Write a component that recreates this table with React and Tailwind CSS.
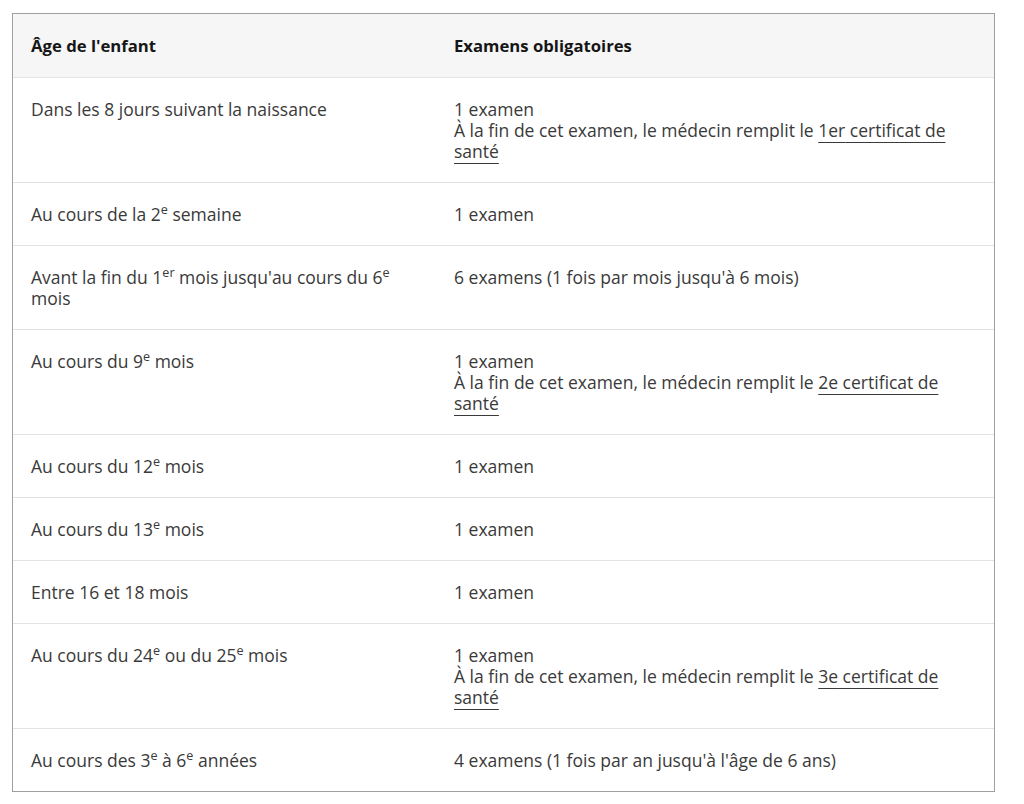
import React from "react";

const Sup = ({ children }) => (
  <span className="relative top-[-0.55em] align-baseline text-[0.72em] leading-none">{children}</span>
);

const Link = ({ children }) => (
  <a href="#" className="text-[#3a3a3a] underline decoration-[#3a3a3a] decoration-1 underline-offset-[5px]">
    {children}
  </a>
);

const Cert = ({ label }) => (
  <>
    1 examen
    <br />
    À la fin de cet examen, le médecin remplit le <Link>{label} certificat de santé</Link>
  </>
);

const rows = [
  [<>Dans les 8 jours suivant la naissance</>, <Cert label="1er" />],
  [<>Au cours de la 2<Sup>e</Sup> semaine</>, <>1 examen</>],
  [
    <>Avant la fin du 1<Sup>er</Sup> mois jusqu'au cours du 6<Sup>e</Sup> mois</>,
    <>6 examens (1 fois par mois jusqu'à 6 mois)</>,
  ],
  [<>Au cours du 9<Sup>e</Sup> mois</>, <Cert label="2e" />],
  [<>Au cours du 12<Sup>e</Sup> mois</>, <>1 examen</>],
  [<>Au cours du 13<Sup>e</Sup> mois</>, <>1 examen</>],
  [<>Entre 16 et 18 mois</>, <>1 examen</>],
  [<>Au cours du 24<Sup>e</Sup> ou du 25<Sup>e</Sup> mois</>, <Cert label="3e" />],
  [<>Au cours des 3<Sup>e</Sup> à 6<Sup>e</Sup> années</>, <>4 examens (1 fois par an jusqu'à l'âge de 6 ans)</>],
];

export default function App() {
  return (
    <div className="min-h-[804px] w-[1024px] bg-white pl-[12px] pt-[13px] font-['Open_Sans','Noto_Sans',sans-serif]">
      <div className="w-[983px] border border-[#a0a0a0] text-[17.5px] leading-[21px] text-[#3a3a3a]">
        <div className="flex bg-[#f6f6f6] text-[16.7px] font-bold text-[#161616]">
          <div className="w-[423px] px-[18px] py-[21px]">Âge de l'enfant</div>
          <div className="flex-1 px-[18px] py-[21px]">Examens obligatoires</div>
        </div>
        {rows.map(([a, b], i) => (
          <div key={i} className="flex border-t border-[#e3e3e3]">
            <div className="w-[423px] px-[18px] py-[20.5px]">{a}</div>
            <div className="flex-1 px-[18px] py-[20.5px]">{b}</div>
          </div>
        ))}
      </div>
    </div>
  );
}
